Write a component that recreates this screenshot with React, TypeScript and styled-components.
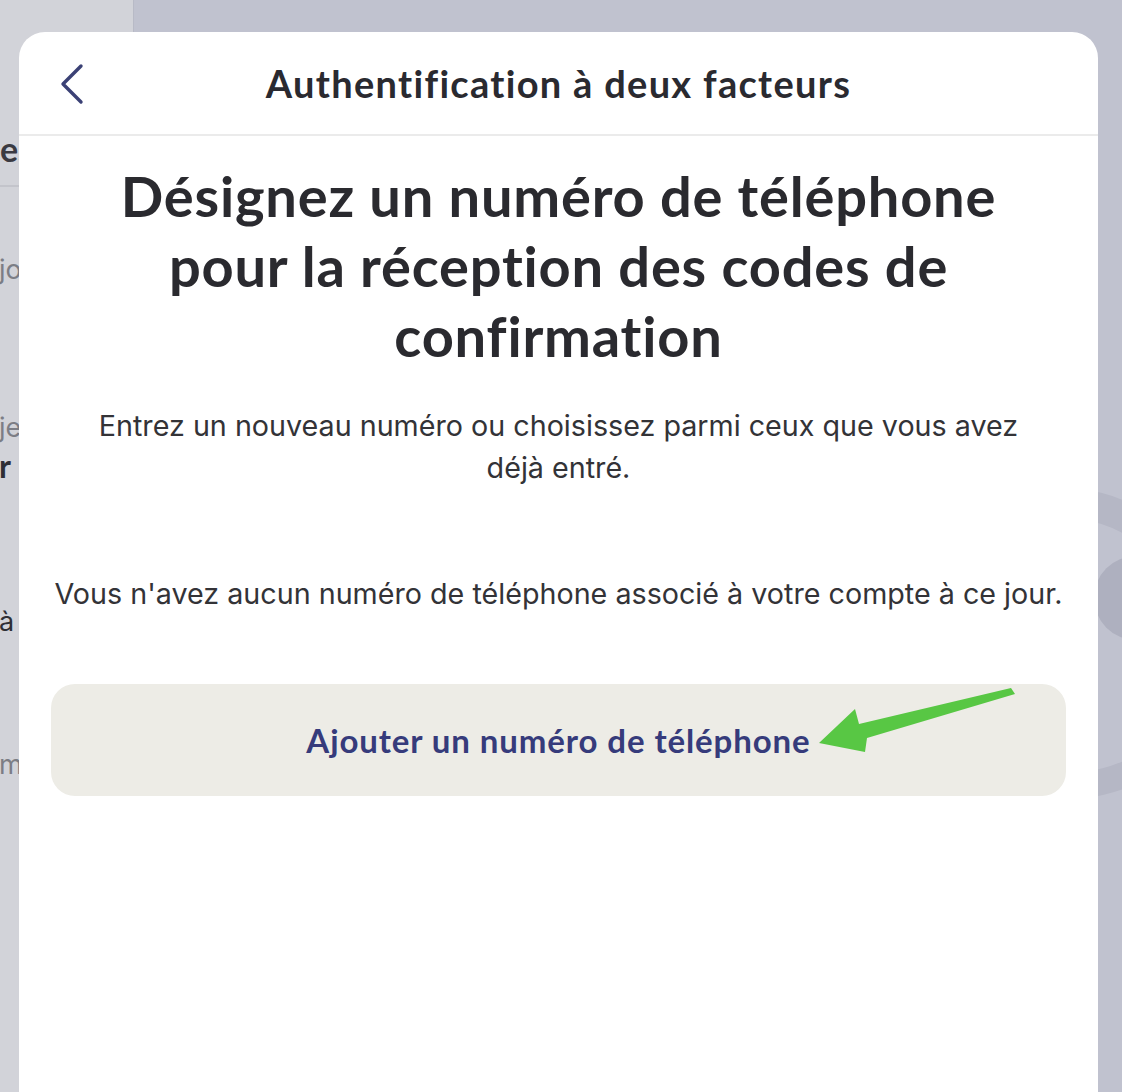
import React from 'react'
import styled, { createGlobalStyle } from 'styled-components'

const GlobalStyle = createGlobalStyle`
  html, body {
    margin: 0;
    padding: 0;
    background: #c0c2cf;
  }
  * { box-sizing: border-box; }
`

const Page = styled.div`
  position: relative;
  display: flex;
  width: 1122px;
  height: 1092px;
  overflow: hidden;
  font-family: Inter, "Noto Sans", sans-serif;
`

const Sidebar = styled.div`
  width: 134px;
  flex-shrink: 0;
  background: #d2d3d9;
  border-right: 1px solid #b8bac6;
  overflow: hidden;
  display: flex;
  flex-direction: column;
`

const SideTitle = styled.div`
  height: 187px;
  padding-top: 128px;
  border-bottom: 2px solid #c3c4cb;
  font-family: Lato, sans-serif;
  font-weight: 700;
  font-size: 34px;
  color: #3a3a42;
  white-space: nowrap;
`

const SideText = styled.div<{ $top: number; $bold?: boolean; $muted?: boolean }>`
  margin-top: ${p => p.$top}px;
  margin-left: -1px;
  font-family: ${p => (p.$bold ? 'Lato, sans-serif' : 'Inter, sans-serif')};
  font-weight: ${p => (p.$bold ? 700 : 400)};
  font-size: ${p => (p.$bold ? 32 : 27)}px;
  line-height: 34px;
  color: ${p => (p.$muted ? '#7c7d85' : '#2e2e34')};
  white-space: nowrap;
`

const Main = styled.div`
  position: relative;
  flex: 1;
  background: #c0c2cf;
`

const Rings = styled.svg`
  position: absolute;
  left: 950px;
  top: 460px;
`

const Modal = styled.div`
  position: absolute;
  left: 19px;
  top: 32px;
  width: 1079px;
  height: 1100px;
  background: #ffffff;
  border-radius: 26px;
  display: flex;
  flex-direction: column;
`

const Header = styled.div`
  position: relative;
  height: 104px;
  border-bottom: 2px solid #ebebeb;
  display: flex;
  align-items: center;
  justify-content: center;
`

const BackButton = styled.button`
  position: absolute;
  left: 38px;
  top: 30px;
  background: none;
  border: none;
  padding: 0;
  cursor: pointer;
  display: flex;
`

const HeaderTitle = styled.h1`
  margin: 0;
  font-family: Lato, sans-serif;
  font-weight: 700;
  font-size: 38px;
  letter-spacing: 1.3px;
  color: #2a2a30;
`

const Body = styled.div`
  position: relative;
  padding: 25px 32px 0;
  display: flex;
  flex-direction: column;
  align-items: stretch;
  text-align: center;
`

const Heading = styled.h2`
  margin: 0;
  font-family: Lato, sans-serif;
  font-weight: 700;
  font-size: 56px;
  line-height: 70px;
  letter-spacing: 0.8px;
  color: #2a2a2f;
`

const Paragraph = styled.p<{ $top: number }>`
  margin: ${p => p.$top}px 0 0;
  font-size: 28.7px;
  line-height: 42px;
  color: #333337;
  white-space: nowrap;
`

const AddButton = styled.button`
  margin-top: 69px;
  height: 112px;
  border: none;
  border-radius: 24px;
  background: #edece6;
  font-family: Lato, sans-serif;
  font-weight: 700;
  font-size: 33px;
  letter-spacing: 0.9px;
  color: #363b7b;
  cursor: pointer;
`

const Annotation = styled.svg`
  position: absolute;
  left: 760px;
  top: 542px;
  pointer-events: none;
`

export default function App() {
  return (
    <>
      <GlobalStyle />
      <Page>
        <Sidebar>
          <SideTitle>es</SideTitle>
          <SideText $top={66} $muted>jour</SideText>
          <SideText $top={124} $muted>je</SideText>
          <SideText $top={4} $bold>r</SideText>
          <SideText $top={122}>à</SideText>
          <SideText $top={109} $muted>mot</SideText>
        </Sidebar>
        <Main>
          <Rings width="60" height="360" viewBox="0 0 60 360">
            <path d="M 0 45 Q 28 48 60 68" fill="none" stroke="#b5b7c5" strokeWidth="30" />
            <circle cx="52" cy="138" r="42" fill="#aeb0bf" />
            <path d="M 0 325 Q 28 322 60 306" fill="none" stroke="#b5b7c5" strokeWidth="26" />
          </Rings>
        </Main>
        <Modal>
          <Header>
            <BackButton aria-label="Retour">
              <svg width="30" height="44" viewBox="0 0 30 44">
                <polyline
                  points="24,4 6,22 24,40"
                  fill="none"
                  stroke="#3b4175"
                  strokeWidth="3.4"
                  strokeLinecap="round"
                  strokeLinejoin="round"
                />
              </svg>
            </BackButton>
            <HeaderTitle>Authentification à deux facteurs</HeaderTitle>
          </Header>
          <Body>
            <Heading>
              Désignez un numéro de téléphone
              <br />
              pour la réception des codes de
              <br />
              confirmation
            </Heading>
            <Paragraph $top={34}>
              Entrez un nouveau numéro ou choisissez parmi ceux que vous avez
              <br />
              déjà entré.
            </Paragraph>
            <Paragraph $top={84}>
              Vous n'avez aucun numéro de téléphone associé à votre compte à ce jour.
            </Paragraph>
            <AddButton>Ajouter un numéro de téléphone</AddButton>
            <Annotation width="260" height="100" viewBox="0 0 260 100">
              <polygon
                points="232,10 236,16 88,60 86,74 40,65 76,31 80,46"
                fill="#58c744"
                strokeLinejoin="round"
              />
            </Annotation>
          </Body>
        </Modal>
      </Page>
    </>
  )
}
